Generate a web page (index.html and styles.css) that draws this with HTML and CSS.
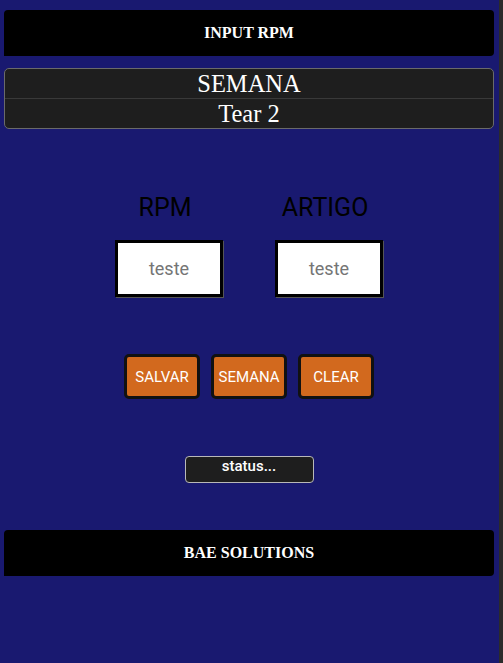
FILE: index.html
```html
<!DOCTYPE html>
<html lang="pt">
<head>
<meta charset="utf-8">
<title>INPUT RPM</title>
<link rel="stylesheet" href="styles.css">
</head>
<body>
  <header class="bar bar-top">INPUT RPM</header>
  <div class="info">
    <div class="info-row">SEMANA</div>
    <div class="info-row">Tear 2</div>
  </div>
  <section class="fields">
    <div class="field">
      <label class="field-label" for="rpm">RPM</label>
      <input class="field-input" id="rpm" type="text" placeholder="teste">
    </div>
    <div class="field">
      <label class="field-label" for="artigo">ARTIGO</label>
      <input class="field-input" id="artigo" type="text" placeholder="teste">
    </div>
  </section>
  <div class="actions">
    <button class="btn">SALVAR</button>
    <button class="btn">SEMANA</button>
    <button class="btn">CLEAR</button>
  </div>
  <div class="status-wrap">
    <div class="status">status...</div>
  </div>
  <footer class="bar bar-bottom">BAE SOLUTIONS</footer>
</body>
</html>
```
FILE: styles.css
```css
html {
  background: #2b2b2b;
  height: 100%;
}
body {
  margin: 0 4px 0 0;
  min-height: 100%;
  box-sizing: border-box;
  padding: 10px 5px 0 4px;
  background: #191970;
  font-family: "Liberation Serif", "Times New Roman", serif;
  overflow: hidden;
}
.bar {
  background: #000;
  color: #fff;
  font-weight: bold;
  font-size: 16px;
  height: 46px;
  display: flex;
  align-items: center;
  justify-content: center;
  border-radius: 4px 4px 4px 0;
}
.info {
  margin-top: 12px;
  background: #1e1e1e;
  border: 1px solid #6a6a6a;
  border-radius: 5px;
  color: #fff;
  font-size: 24.5px;
  text-align: center;
}
.info-row {
  height: 29px;
  line-height: 29px;
}
.info-row + .info-row {
  border-top: 1px solid #393939;
}
.fields {
  margin-top: 65px;
  display: flex;
  justify-content: center;
  gap: 52px;
}
.field {
  display: flex;
  flex-direction: column;
  align-items: center;
}
.field-label {
  font-family: Roboto, "Liberation Sans", sans-serif;
  font-size: 25px;
  line-height: 28px;
  color: #000;
  margin-right: 8px;
}
.field-input {
  margin-top: 18px;
  box-sizing: border-box;
  width: 108px;
  height: 57px;
  border: 3px solid #000;
  box-shadow: 1px 1px 0 #555;
  background: #fff;
  padding: 0;
  font-family: Roboto, "Liberation Sans", sans-serif;
  font-size: 18px;
  text-align: center;
  outline: none;
}
.field-input::placeholder {
  color: #757575;
}
.actions {
  margin-top: 57px;
  display: flex;
  justify-content: center;
  gap: 11px;
}
.btn {
  box-sizing: border-box;
  width: 76px;
  height: 45px;
  background: #d2691e;
  border: 3px solid #111;
  border-radius: 5px;
  color: #fff;
  font-family: Roboto, "Liberation Sans", sans-serif;
  font-size: 15px;
  padding: 0;
}
.status-wrap {
  margin-top: 57px;
  display: flex;
  justify-content: center;
}
.status {
  box-sizing: border-box;
  width: 129px;
  height: 27px;
  background: #1e1e1e;
  border: 1px solid #b8b8b8;
  border-radius: 4px;
  color: #fff;
  font-family: Roboto, "Liberation Sans", sans-serif;
  font-size: 15px;
  font-weight: 500;
  line-height: 19px;
  text-align: center;
}
.bar-bottom {
  margin-top: 47px;
}
```
